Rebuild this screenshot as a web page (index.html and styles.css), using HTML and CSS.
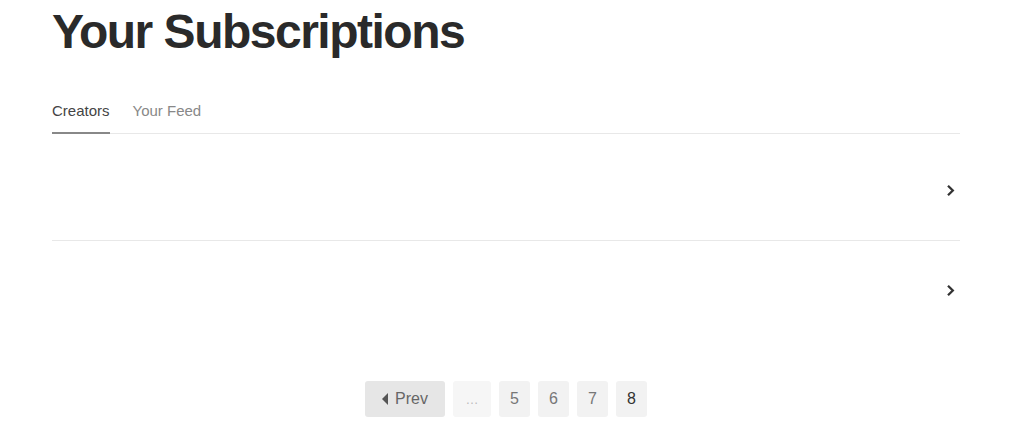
FILE: index.html
```html
<!DOCTYPE html>
<html lang="en">
<head>
    <meta charset="UTF-8">
    <title>Your Subscriptions</title>
    <link rel="stylesheet" href="styles.css">
</head>
<body>
    <div class="page">
        <h1 class="page-title">Your Subscriptions</h1>

        <div class="tabs">
            <a class="tab active" href="#">Creators</a>
            <a class="tab" href="#">Your Feed</a>
        </div>

        <ul class="creator-list">
            <li class="creator-row">
                <svg class="chevron" width="9" height="13" viewBox="0 0 9 13"><path d="M2 1.8 L6.8 6.5 L2 11.2" fill="none" stroke="#333" stroke-width="2.3"/></svg>
            </li>
            <li class="creator-row">
                <svg class="chevron" width="9" height="13" viewBox="0 0 9 13"><path d="M2 1.8 L6.8 6.5 L2 11.2" fill="none" stroke="#333" stroke-width="2.3"/></svg>
            </li>
        </ul>

        <div class="pagination">
            <a class="page-btn prev" href="#"><span class="caret"></span>Prev</a>
            <span class="page-btn gap">&hellip;</span>
            <a class="page-btn" href="#">5</a>
            <a class="page-btn" href="#">6</a>
            <a class="page-btn" href="#">7</a>
            <a class="page-btn current" href="#">8</a>
        </div>
    </div>
</body>
</html>
```

FILE: styles.css
```css
body {
    margin: 0;
    font-family: "Liberation Sans", Arial, sans-serif;
    color: #2a2a2a;
    background: #fff;
}

.page {
    width: 908px;
    margin: 0 52px;
}

.page-title {
    margin: 0;
    padding-top: 2px;
    font-size: 48px;
    line-height: 60px;
    font-weight: 700;
    letter-spacing: -1.5px;
    color: #2a2a2a;
}

.tabs {
    display: flex;
    gap: 23px;
    margin-top: 40px;
    border-bottom: 1px solid #e8e8e8;
}

.tab {
    padding-bottom: 13px;
    font-size: 15px;
    color: #888;
    text-decoration: none;
}

.tab.active {
    color: #444;
    border-bottom: 2px solid #888;
    margin-bottom: -1px;
}

.creator-list {
    list-style: none;
    margin: 0;
    padding: 0;
}

.creator-row {
    display: flex;
    justify-content: flex-end;
    align-items: center;
    height: 106px;
    padding-right: 5px;
    border-bottom: 1px solid #e8e8e8;
}

.creator-row:last-child {
    border-bottom: none;
    height: 92px;
}

.chevron {
    display: block;
    margin-top: 6px;
}

.pagination {
    display: flex;
    justify-content: center;
    gap: 8px;
    margin-top: 48px;
}

.page-btn {
    display: flex;
    align-items: center;
    justify-content: center;
    min-width: 31px;
    height: 36px;
    border-radius: 3px;
    background: #f2f2f2;
    font-size: 16px;
    color: #777;
    text-decoration: none;
}

.page-btn.prev {
    width: 80px;
    background: #e6e6e6;
    color: #666;
    gap: 7px;
}

.caret {
    width: 0;
    height: 0;
    border-top: 6px solid transparent;
    border-bottom: 6px solid transparent;
    border-right: 6px solid #555;
}

.page-btn.gap {
    width: 38px;
    background: #f6f6f6;
    color: #bbb;
    font-size: 13px;
}

.page-btn.current {
    color: #333;
}
```
